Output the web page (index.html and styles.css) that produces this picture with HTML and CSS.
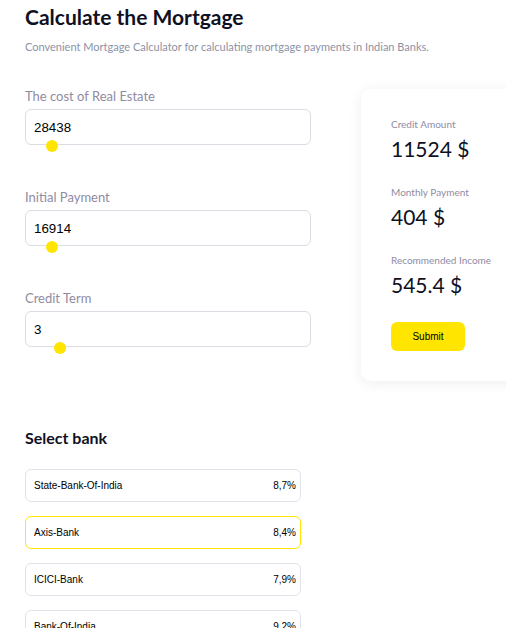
FILE: index.html
```html
<!DOCTYPE html>
<html>
<head>
<meta charset="utf-8">
<link rel="stylesheet" href="styles.css">
</head>
<body>
<div class="page">
  <h1 class="title">Calculate the Mortgage</h1>
  <p class="subtitle">Convenient Mortgage Calculator for calculating mortgage payments in Indian Banks.</p>
  <div class="main">
    <div class="fields">
      <div class="field">
        <label class="label">The cost of Real Estate</label>
        <div class="input-wrap">
          <input class="input" type="text" value="28438">
          <span class="thumb" style="left:21px"></span>
        </div>
      </div>
      <div class="field">
        <label class="label">Initial Payment</label>
        <div class="input-wrap">
          <input class="input" type="text" value="16914">
          <span class="thumb" style="left:21px"></span>
        </div>
      </div>
      <div class="field">
        <label class="label">Credit Term</label>
        <div class="input-wrap">
          <input class="input" type="text" value="3">
          <span class="thumb" style="left:29px"></span>
        </div>
      </div>
    </div>
    <div class="card">
      <div class="stat">
        <div class="stat-label">Credit Amount</div>
        <div class="stat-value">11524 $</div>
      </div>
      <div class="stat">
        <div class="stat-label">Monthly Payment</div>
        <div class="stat-value">404 $</div>
      </div>
      <div class="stat">
        <div class="stat-label">Recommended Income</div>
        <div class="stat-value">545.4 $</div>
      </div>
      <button class="submit">Submit</button>
    </div>
  </div>
  <h2 class="section-title">Select bank</h2>
  <div class="banks">
    <div class="bank"><span>State-Bank-Of-India</span><span>8,7%</span></div>
    <div class="bank selected"><span>Axis-Bank</span><span>8,4%</span></div>
    <div class="bank"><span>ICICI-Bank</span><span>7,9%</span></div>
    <div class="bank"><span>Bank-Of-India</span><span>9,2%</span></div>
  </div>
</div>
</body>
</html>
```
FILE: styles.css
```css
html, body {
  margin: 0;
  padding: 0;
  background: #fff;
  overflow: hidden;
}
body {
  font-family: "Lato", "Noto Sans", sans-serif;
  color: #0f1123;
}
.page {
  padding: 0 0 0 25px;
}
.title {
  margin: 0;
  padding-top: 4px;
  font-size: 21px;
  line-height: 26px;
  font-weight: 700;
  color: #0f1123;
}
.subtitle {
  margin: 10px 0 0;
  font-size: 11px;
  line-height: 14px;
  color: #8c92a6;
}
.main {
  display: flex;
  align-items: flex-start;
  gap: 50px;
  margin-top: 34px;
}
.fields {
  width: 286px;
  flex: none;
}
.field {
  height: 101px;
}
.label {
  display: block;
  font-size: 13px;
  line-height: 16px;
  color: #8f8ba3;
  height: 21px;
}
.input-wrap {
  position: relative;
}
.input {
  box-sizing: border-box;
  width: 286px;
  height: 36px;
  border: 1px solid #dcdce5;
  border-radius: 6px;
  padding: 0 8px;
  font-family: "Liberation Sans", Arial, sans-serif;
  font-size: 13.33px;
  color: #000;
  outline: none;
  background: #fff;
}
.thumb {
  position: absolute;
  top: 31px;
  width: 12px;
  height: 12px;
  border-radius: 50%;
  background: #ffe500;
}
.card {
  flex: none;
  width: 200px;
  margin-top: 1px;
  box-sizing: border-box;
  padding: 29px 30px 30px;
  background: #fff;
  border-radius: 10px;
  box-shadow: 0 2px 14px rgba(20, 20, 60, 0.07);
}
.stat {
  margin-bottom: 24px;
}
.stat-label {
  font-size: 10px;
  line-height: 12px;
  color: #8f8ba3;
}
.stat-value {
  margin-top: 6px;
  font-size: 21px;
  line-height: 26px;
  color: #0f1123;
}
.submit {
  display: block;
  margin-top: 24px;
  width: 74px;
  height: 29px;
  border: none;
  border-radius: 6px;
  background: #ffe500;
  font-family: "Liberation Sans", Arial, sans-serif;
  font-size: 10px;
  color: #000;
  padding: 0;
}
.section-title {
  margin: 37px 0 0;
  font-size: 16px;
  line-height: 20px;
  font-weight: 700;
  color: #0f1123;
}
.banks {
  margin-top: 21px;
  width: 276px;
}
.bank {
  box-sizing: border-box;
  height: 33px;
  margin-bottom: 14px;
  border: 1px solid #e2e2eb;
  border-radius: 6px;
  display: flex;
  align-items: center;
  justify-content: space-between;
  padding: 0 4px 0 8px;
  font-family: "Liberation Sans", Arial, sans-serif;
  font-size: 10px;
  color: #000;
}
.bank.selected {
  border-color: #ffe500;
}
```
